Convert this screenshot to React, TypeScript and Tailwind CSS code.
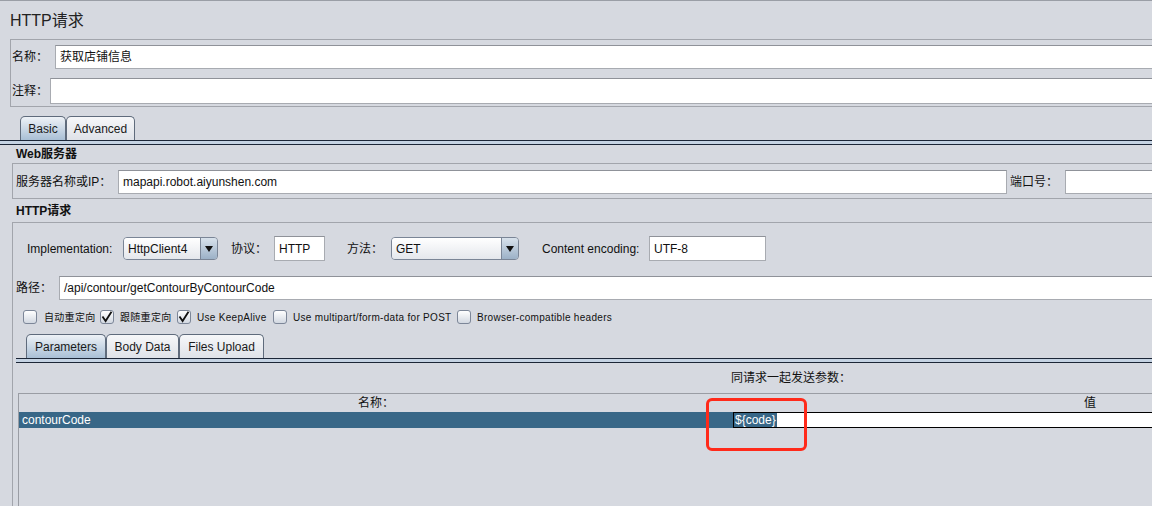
import React from "react";

const FONT = "font-['Liberation_Sans','Noto_Sans_CJK_SC',sans-serif]";

function Tab({ label, active, w }: { label: string; active?: boolean; w: string }) {
  return (
    <div
      className={`${w} shrink-0 h-full flex items-center justify-center whitespace-nowrap text-[12px] text-[#1a1a1a] border border-b-0 border-[#5f6b7c] rounded-t-[5px] ${
        active ? "bg-linear-to-b from-[#eef2f7] to-[#a9bfd5]" : "bg-linear-to-b from-[#f6f7f9] to-[#dfe2e8]"
      }`}
    >
      {label}
    </div>
  );
}

function Strip() {
  return <div className="h-[5px] border-y border-[#1c2637] bg-[#c5d3e3]" />;
}

function Checkbox({ checked }: { checked?: boolean }) {
  return (
    <div className="w-[14px] h-[14px] shrink-0 rounded-[3px] border border-[#7c8698] bg-linear-to-b from-white to-[#d2d8e1] flex items-center justify-center">
      {checked && (
        <svg width="12" height="12" viewBox="0 0 12 12">
          <path d="M2 6.2 L4.6 10 L10 1.5" fill="none" stroke="#111" strokeWidth="1.8" strokeLinecap="square" />
        </svg>
      )}
    </div>
  );
}

function Select({ value, w }: { value: string; w: string }) {
  return (
    <div className={`${w} shrink-0 h-[23px] flex rounded-[4px] border border-[#7a8596] overflow-hidden`}>
      <div className="flex-1 flex items-center pl-[4px] text-[12px] text-[#111] bg-linear-to-b from-white to-[#e4e7ec]">
        {value}
      </div>
      <div className="w-[17px] shrink-0 border-l border-[#7a8596] bg-linear-to-b from-[#d8e2ec] to-[#9cb1c7] flex items-center justify-center">
        <svg width="8" height="6" viewBox="0 0 8 6">
          <path d="M0 0 L8 0 L4 6 Z" fill="#111" />
        </svg>
      </div>
    </div>
  );
}

function Input({ w, h = "h-[24px]", value }: { w: string; h?: string; value?: string }) {
  return (
    <div className={`${w} ${h} shrink-0 bg-white border border-[#a8abb1] border-t-[#8f9299] flex items-center pl-[4px] text-[12px] text-[#111] whitespace-nowrap`}>
      {value}
    </div>
  );
}

function Label({ w, children, cls = "" }: { w?: string; children: React.ReactNode; cls?: string }) {
  return <div className={`${w ?? ""} ${cls} shrink-0 whitespace-nowrap`}>{children}</div>;
}

export default function App() {
  return (
    <div className={`${FONT} relative w-[1152px] h-[506px] overflow-hidden bg-[#d6d9e0] border-t border-[#9a9ea6]`}>
      <div className="w-[1220px]">
        {/* title */}
        <div className="h-[38px] flex items-center pl-[10px] pt-[2px] text-[16px] text-[#222]">HTTP请求</div>

        {/* name box */}
        <div className="ml-[10px] border border-[#a2a5ac] pt-[5px] pb-[2px] pl-[1px] text-[12px] text-[#111]">
          <div className="h-[24px] flex items-center">
            <Label w="w-[43px]">名称：</Label>
            <Input w="w-[1200px]" value="获取店铺信息" />
          </div>
          <div className="mt-[9px] h-[26px] flex items-center">
            <Label w="w-[38px]">注释：</Label>
            <Input w="w-[1200px]" h="h-[26px]" />
          </div>
        </div>

        {/* Basic / Advanced tabs */}
        <div className="mt-[9px] h-[24px] flex pl-[20px]">
          <Tab label="Basic" active w="w-[46px]" />
          <Tab label="Advanced" w="w-[69px]" />
        </div>
        <Strip />

        <div className="h-[18px] flex items-center pl-[16px] text-[12px] font-bold text-[#111]">Web服务器</div>

        {/* server box */}
        <div className="ml-[12px] border border-[#a2a5ac] pt-[6px] pb-[4px] pl-[3px] flex items-center text-[12px] text-[#111]">
          <Label w="w-[102px]">服务器名称或IP：</Label>
          <Input w="w-[889px]" value="mapapi.robot.aiyunshen.com" />
          <Label w="w-[55px]" cls="ml-[3px]">端口号：</Label>
          <Input w="w-[200px]" />
        </div>

        <div className="h-[23px] flex items-center pl-[16px] text-[12px] font-bold text-[#111]">HTTP请求</div>

        {/* HTTP request box */}
        <div className="ml-[12px] border-t border-l border-[#a2a5ac] h-[300px] pt-[13px]">
          <div className="h-[25px] flex items-center pl-[14px] text-[12px] text-[#111]">
            <Label w="w-[96px]">Implementation:</Label>
            <Select value="HttpClient4" w="w-[95px]" />
            <Label w="w-[43px]" cls="ml-[13px]">协议：</Label>
            <Input w="w-[51px]" h="h-[25px]" value="HTTP" />
            <Label w="w-[44px]" cls="ml-[22px]">方法：</Label>
            <Select value="GET" w="w-[128px]" />
            <Label w="w-[107px]" cls="ml-[23px]">Content encoding:</Label>
            <Input w="w-[117px]" h="h-[25px]" value="UTF-8" />
          </div>

          <div className="mt-[15px] h-[24px] flex items-center pl-[3px] text-[12px] text-[#111]">
            <Label w="w-[43px]">路径：</Label>
            <Input w="w-[1150px]" value="/api/contour/getContourByContourCode" />
          </div>

          <div className="mt-[10px] h-[14px] flex items-center pl-[10px] text-[10px] text-[#111] tracking-[0.3px]">
            <Checkbox />
            <Label w="w-[56px]" cls="ml-[7px]">自动重定向</Label>
            <Checkbox checked />
            <Label w="w-[57px]" cls="ml-[6px]">跟随重定向</Label>
            <Checkbox checked />
            <Label w="w-[76px]" cls="ml-[6px]">Use KeepAlive</Label>
            <Checkbox />
            <Label w="w-[164px]" cls="ml-[6px]">Use multipart/form-data for POST</Label>
            <Checkbox />
            <Label cls="ml-[6px]">Browser-compatible headers</Label>
          </div>

          {/* inner tabs */}
          <div className="mt-[10px] ml-[3px]">
            <div className="h-[24px] flex pl-[10px]">
              <Tab label="Parameters" active w="w-[80px]" />
              <Tab label="Body Data" w="w-[73px]" />
              <Tab label="Files Upload" w="w-[85px]" />
            </div>
            <Strip />
          </div>

          <div className="h-[30px] flex items-center pl-[718px] text-[12px] text-[#111] whitespace-nowrap">同请求一起发送参数：</div>

          {/* table */}
          <div className="ml-[5px] border-t border-l border-[#9a9da4] h-[120px] w-[1440px]">
            <div className="h-[18px] flex text-[12px] text-[#111]">
              <div className="w-[714px] shrink-0 flex items-center justify-center">名称：</div>
              <div className="w-[714px] shrink-0 flex items-center justify-center">值</div>
            </div>
            <div className="h-[16px] flex text-[12px]">
              <div className="w-[714px] shrink-0 bg-[#386787] text-white flex items-center pl-[3px]">contourCode</div>
              <div className="w-[714px] shrink-0 bg-white border border-black flex items-center">
                <span className="bg-[#386787] text-white leading-[14px] px-[1px]">{"${code}"}</span>
              </div>
            </div>
          </div>
        </div>
      </div>

      {/* red highlight */}
      <div className="absolute left-[706px] top-[397px] w-[101px] h-[53px] border-[3px] border-[#ff2a1a] rounded-[6px]" />
    </div>
  );
}
